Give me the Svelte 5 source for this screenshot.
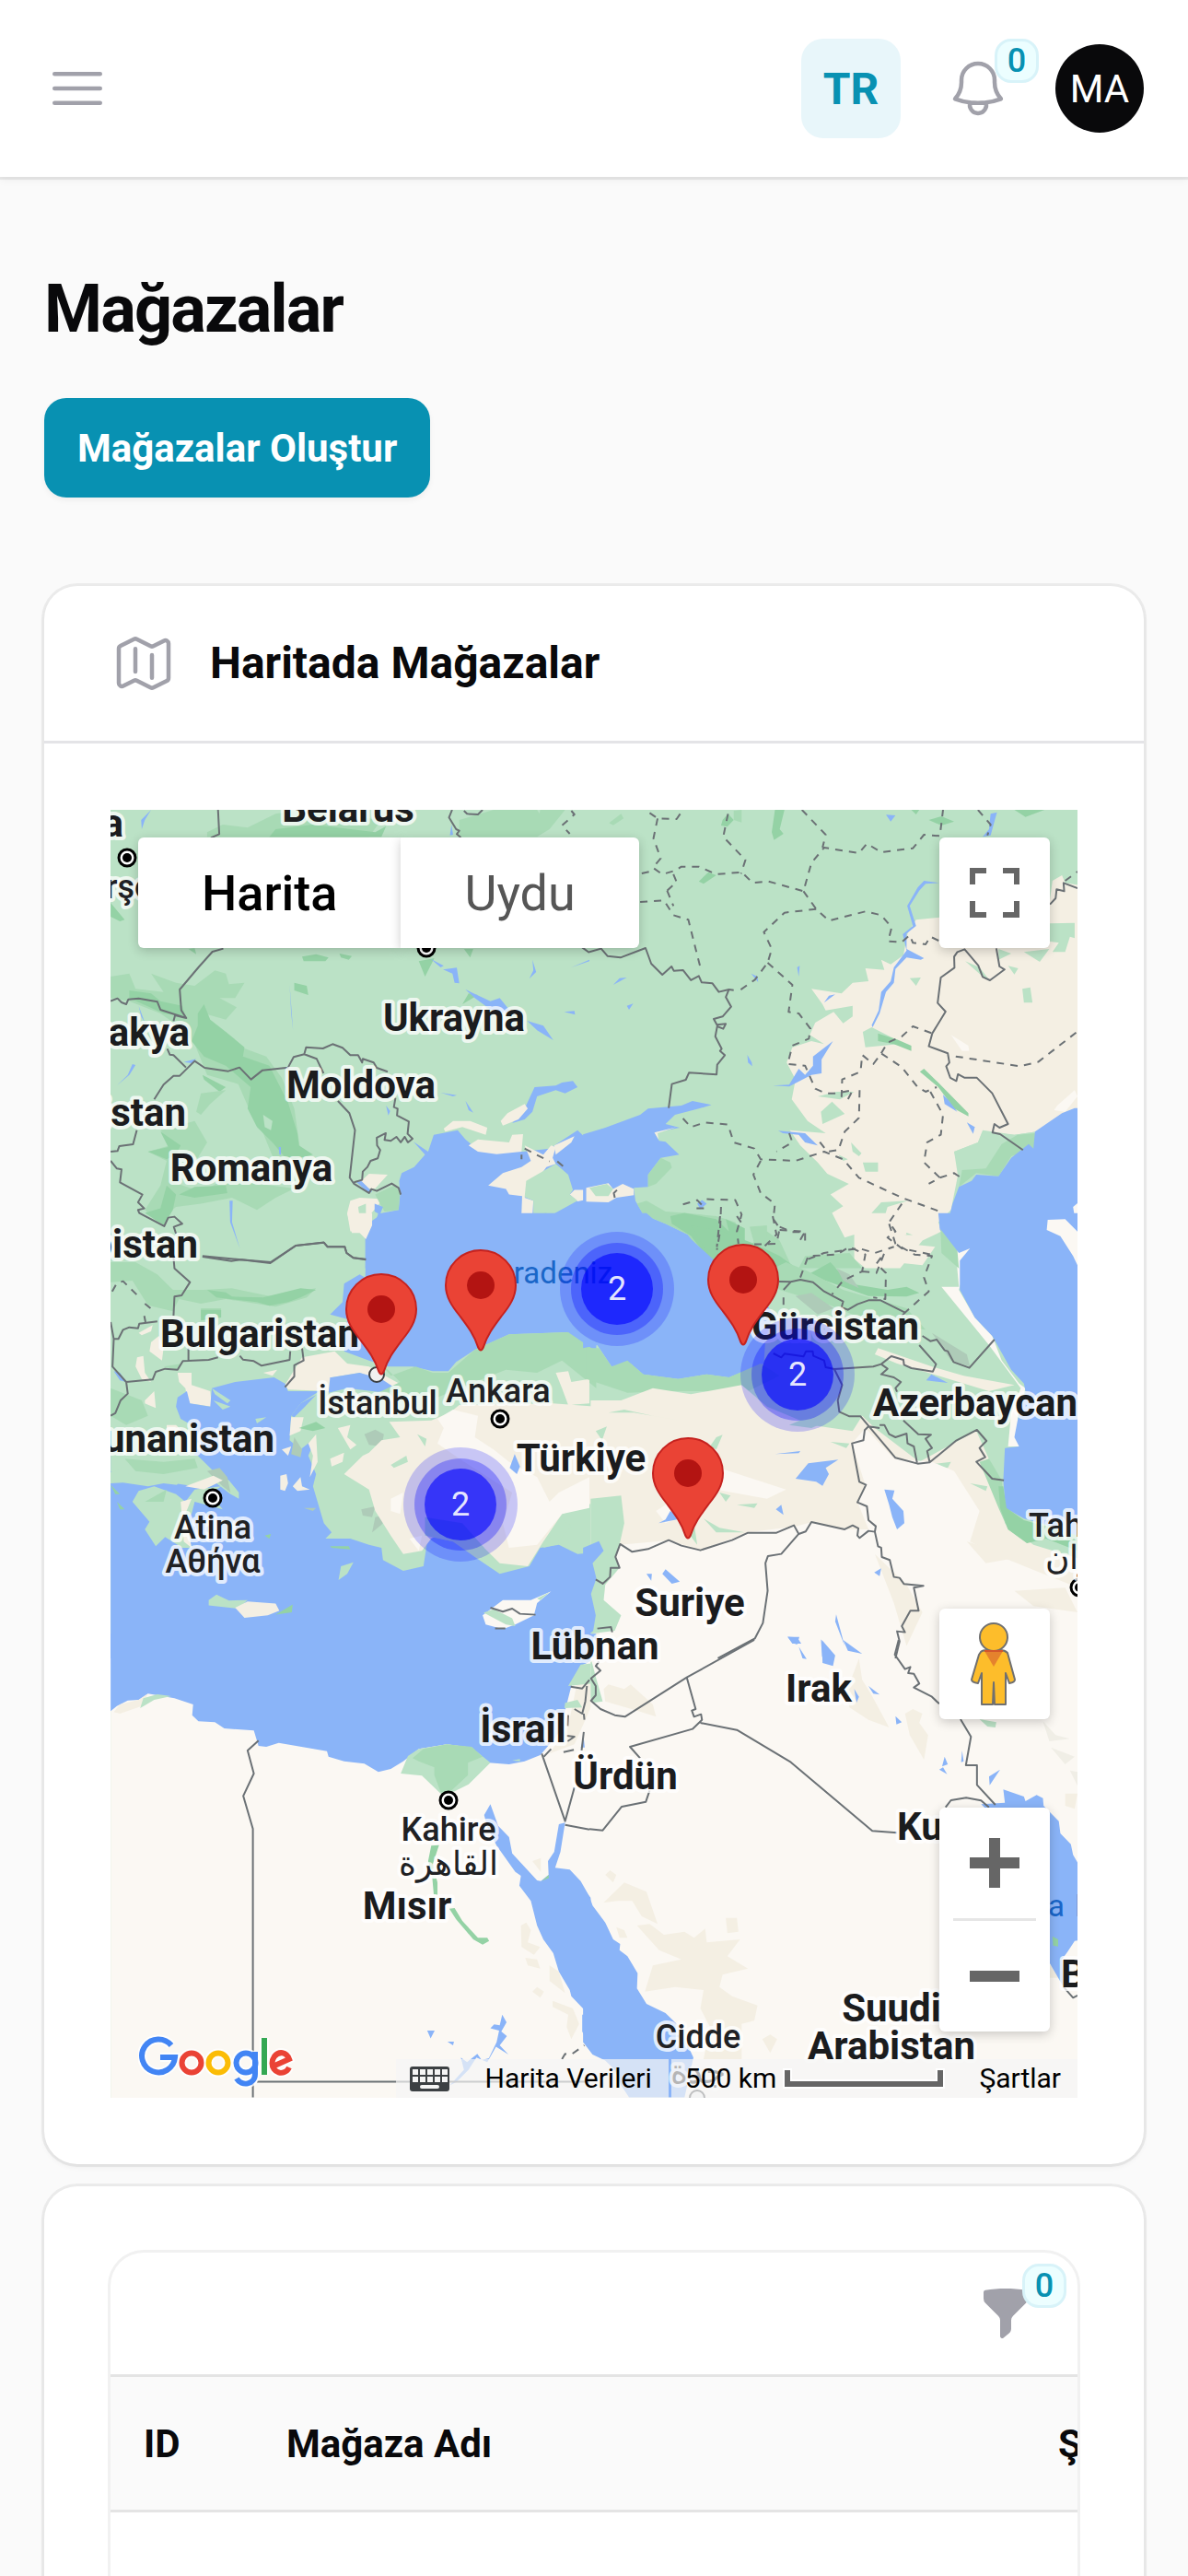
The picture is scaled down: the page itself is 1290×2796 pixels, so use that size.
<script>
  // Coordinates of places and pins are in map units (the map is 1050 x 1398).
  const W = 1050;
  const H = 1398;

  const countries = [
    ['Belarus', 258, 13, 'middle'], ['Polonya', 14, 29, 'end'], ['Ukrayna', 373, 240, 'middle'],
    ['Slovakya', 86, 256, 'end'], ['Moldova', 272, 313, 'middle'], ['Macaristan', 82, 343, 'end'],
    ['Romanya', 153, 403, 'middle'], ['Sırbistan', 95, 486, 'end'], ['Bulgaristan', 162, 583, 'middle'],
    ['Yunanistan', 178, 697, 'end'], ['Türkiye', 511, 718, 'middle'], ['Gürcistan', 787, 575, 'middle'],
    ['Azerbaycan', 939, 658, 'middle'], ['Suriye', 629, 875, 'middle'], ['Lübnan', 526, 922, 'middle'],
    ['Irak', 769, 968, 'middle'], ['İsrail', 448, 1012, 'middle'], ['Ürdün', 559, 1063, 'middle'],
    ['Mısır', 322, 1204, 'middle'], ['Kuveyt', 854, 1118, 'start'], ['Suudi', 848, 1315, 'middle'],
    ['Arabistan', 848, 1356, 'middle'], ['Bahreyn', 1032, 1278, 'start']
  ];
  const cities = [
    ['Varşova', 18, 96, 'middle'], ['İstanbul', 290, 656, 'middle'], ['Ankara', 421, 643, 'middle'],
    ['Atina', 111, 791, 'middle'], ['Αθήνα', 111, 828, 'middle'], ['Tahran', 997, 789, 'start'],
    ['تهران', 1015, 824, 'start'], ['Kahire', 367, 1119, 'middle'], ['القاهرة', 367, 1156, 'middle'],
    ['Cidde', 638, 1344, 'middle'], ['جدة', 638, 1382, 'middle']
  ];
  const seas = [['Karadeniz', 545, 514, 'end'], ['Basra', 1036, 1201, 'end'], ['Körfezi', 1047, 1201, 'start']];
  const capitals = [[18, 52], [343, 150], [423, 661], [111, 747], [367, 1075], [1052, 844]];

  const pins = [
    { x: 294, y: 614 }, { x: 402, y: 588 }, { x: 687, y: 582 }, { x: 627, y: 792 }
  ];
  const clusters = [
    { x: 380, y: 754, count: 2 }, { x: 550, y: 520, count: 2 }, { x: 746, y: 613, count: 2 }
  ];

  // The terrain is drawn in six sheets, three rows by two columns.
  const left = (y) => `translate(-10 ${y}) scale(.338 .3333)`;
  const right = (y) => `translate(520 ${y}) scale(.3444 .3333)`;
  const sheets = [
    {
      at: left(-9),
      shapes: [
        ['g2', 'M340 100L390 75 470 85 560 40 640 27 900 60 860 115 340 115ZM1150 60L1260 27H1400L1440 90 1400 115H1150ZM1410 27H1490L1440 90 1400 80Z'],
        ['g3', 'M560 90L680 75 880 100 915 80 900 115H540ZM30 330L75 385 60 390 30 375ZM645 505L690 497 730 508 720 520 650 520ZM765 495L805 503 795 515 770 508ZM280 480L300 478 305 497Z'],
        ['g2', 'M160 560L240 590 300 600 365 550 400 560 410 595 460 590 430 640 380 640 435 670 400 710 330 690 370 760 450 800 530 830 580 900 620 1000 640 1140 560 1180 520 1080 470 990 440 920 340 890 300 790 260 740 190 690 90 650 30 640V570L90 560 110 610 200 620Z'],
        ['g3', 'M90 615L160 625 190 650 260 665 270 700 200 690 90 640ZM310 690L330 660 350 710 400 750 460 800 455 830 540 860 570 920 600 980 630 1080 635 1120 680 1150 600 1170 550 1110 500 1060 470 1000 480 930 400 860 330 830 290 780 310 730ZM325 890L400 930 380 945 330 905Z'],
        ['g1', 'M520 1020L550 1040 545 1070 525 1060Z'],
        ['g2', 'M320 950L400 940 350 985 320 1020 305 1010ZM150 1140L220 1120 190 1070 300 1040 340 1110 310 1160 240 1150 230 1240 320 1270 400 1230 620 1260 560 1290 500 1330 420 1290 320 1310 240 1320 180 1370 140 1330 190 1250 210 1170Z'],
        ['g3', 'M150 1140L215 1125 190 1075 255 1120 240 1150 210 1165ZM250 1280L300 1255 400 1250 405 1275 300 1290ZM140 1340L190 1325 210 1250 240 1280 230 1330 200 1380Z'],
        ['g3', 'M1020 520L1070 510 1040 570ZM1165 480H1195L1185 508ZM620 590L660 600 665 630 620 615ZM1160 660L1180 625 1210 630Z'],
        ['w', 'M130 90L128 60 160 27 140 60ZM1120 110L1125 75 1130 108ZM1058 512L1100 535 1090 540ZM1098 547L1142 541 1150 592 1135 590 1128 560ZM1170 612L1250 650 1280 640 1320 690 1260 685 1200 640ZM1368 714L1420 730 1452 777 1400 745ZM1385 515L1397 555 1375 577 1388 550ZM1510 540L1568 515 1568 520ZM1487 685L1520 682 1522 694ZM605 597L616 745 610 690ZM1090 948L1142 956 1130 960ZM1170 975L1195 1013 1180 1005ZM915 990L928 1008 922 1022ZM412 1300H422L420 1370 445 1455 414 1370ZM50 925L85 890 100 855 110 858 90 890ZM265 848L305 838 290 852ZM120 665L140 720 128 700ZM570 1125H577V1150H572Z'],
        ['w', 'M848 1520V1410L870 1365 905 1340 955 1330 960 1280 957 1235 965 1210 1005 1190 1040 1150 1003 1108 1050 1140 1068 1085 1145 1070 1170 1100 1215 1140 1355 1140 1440 1130 1530 1070 1550 1090 1590 1075V1520Z'],
        ['w', 'M1320 1047L1360 1000 1392 930 1460 925 1480 915 1515 910 1530 930 1490 950 1460 940 1400 960 1385 1010 1360 1035Z'],
        ['b', 'M1100 1065L1130 1040 1185 1040 1240 1062 1235 1085 1160 1060 1105 1075ZM1283 1040L1305 1015 1360 985 1370 1000 1340 1035 1290 1055ZM1180 1120L1210 1100 1310 1110 1320 1085 1355 1083 1350 1140 1270 1148 1210 1140ZM1455 1120L1520 1090 1510 1110 1460 1150ZM830 1240L860 1212 920 1215 880 1260 850 1260ZM800 1300L830 1290 905 1295 860 1350 870 1370 850 1415 830 1400 800 1400 790 1340Z'],
        ['g1', 'M825 1320L850 1310V1350L830 1355Z'],
        ['g2', 'M880 1280L940 1250 960 1270 955 1330 910 1335 895 1310Z'],
        ['w', 'M820 1240L835 1235 870 1270 860 1275ZM878 1310L905 1320 895 1345 878 1335Z'],
        ['b', 'M1360 1120L1420 1150 1445 1120 1460 1125 1450 1160 1460 1180 1430 1190 1360 1290 1388 1300 1385 1350 1355 1382 1338 1375 1350 1340 1352 1285 1310 1280 1300 1262 1243 1250 1290 1210 1350 1190 1380 1170ZM1505 1280L1520 1265 1590 1265V1290L1530 1302Z'],
        ['g1', 'M1460 1180L1500 1215 1515 1265 1505 1280 1530 1300 1440 1350 1410 1392 1370 1397 1355 1382 1388 1345 1388 1300 1360 1288 1365 1235Z'],
        ['g2', 'M1370 1375L1390 1345 1430 1340 1440 1350 1400 1385Z']
      ],
      borders:
        'M375 27L379 106 352 118M392 479L357 489 312 540 252 612 257 680 273 705 237 696 232 715M273 705L190 678 180 652 120 641 87 644 80 660 65 654 52 641 30 650M212 805L220 824 232 826 272 866M30 1140L52 1138 58 1122 102 1116 114 1070M170 970L200 922 232 893H252L300 845 332 867 408 878 444 866 481 905 518 875 600 866 618 832 652 823 692 838 714 885M652 823L658 800 712 804 743 790 775 802 800 826 825 826 838 850 840 838 875 850 885 867 920 880M760 975L797 1015 815 1070 798 1225 812 1245 860 1275 868 1262 885 1268 933 1244 955 1258 962 1280M945 965L940 995 952 1000 950 1022 988 1042 984 1082 1000 1098 985 1110 975 1092 962 1110 948 1092 930 1105 910 1102 914 1080 885 1095 886 1120 896 1135 888 1162 865 1170 855 1190 840 1205 838 1232 812 1240M30 1170L50 1195 65 1198 60 1240 132 1280 118 1305 138 1325 118 1330 122 1340 202 1383 215 1355 235 1352 260 1375 233 1385 240 1407M325 1480L450 1492 545 1500 625 1446 715 1436 727 1450H782L788 1470 810 1486 850 1492M1127 27L1117 52 1140 90 1150 95 1142 106 1155 117M1165 30L1175 40 1210 42 1225 27M1545 475L1568 492',
      dashes: 'M1510 30L1520 42 1480 78 1505 105M1360 1130L1440 1172M1465 1172L1495 1197M1350 1150V1165'
    },
    {
      at: right(-9),
      shapes: [
        ['g3', 'M585 27H615L600 90 612 105 582 125 575 100ZM420 60L437 40 455 60 435 82 415 78ZM1070 60L1110 48 1150 65 1110 78ZM1340 27H1435L1375 50ZM345 260L375 230 400 240 360 268ZM1015 27H1040L1030 42Z'],
        ['g2', 'M62 70L100 40 108 55 75 77ZM455 30L480 27 480 68 455 60Z'],
        ['b', 'M1030 385L1100 378 1400 330 1450 335 1460 258 1490 240 1500 265 1590 280V1000L1410 1075 1340 1085 1240 1070 1225 1110 1150 1140 1165 1200 1140 1330 1100 1370 1110 1400 1050 1430 980 1520H870L835 1490V1410L805 1420 765 1340 800 1318 760 1280 818 1245 750 1212 720 1175 665 1120 632 1070 745 1080 688 1040 638 970 650 905 622 850 640 800 700 780 740 790 695 760 712 720 770 685 800 722 830 700V665L745 680 735 660 700 610 795 625 830 590 880 585 870 543 930 548 920 515 950 530 990 500 1003 430Z'],
        ['g1', 'M862 750L890 735 1015 800 975 790 870 800ZM1450 397L1530 395V445L1515 440 1500 490 1460 490 1480 460 1450 455ZM1370 490L1450 480 1420 522ZM1365 610L1390 605 1397 655 1370 655ZM1185 520L1230 540 1260 580 1240 570ZM1290 480L1330 495 1290 515ZM1010 575L1045 573 1030 600ZM1320 535L1352 543 1340 563ZM730 1010L765 977 805 1017 735 1050ZM720 960L780 945 835 945 790 970ZM862 1175H910V1205H870ZM825 1110L858 1145 850 1155 830 1140ZM785 1150L815 1165 800 1170ZM1150 1140L1225 1110 1240 1075 1340 1085 1410 1075 1400 1130 1330 1150 1290 1220 1165 1240ZM890 1340L920 1305 1005 1300 940 1320 930 1355 900 1358ZM885 1390L930 1378 1020 1412 920 1410Z'],
        ['g3', 'M910 755L970 775 1015 795V812L960 790 910 780ZM1042 880L1055 870 1100 915 1195 1015V1025L1150 1000 1100 930Z'],
        ['g2', 'M1300 1115L1350 1085 1405 1080V1130L1330 1155 1290 1220 1220 1210 1165 1255 1175 1200 1250 1195Z'],
        ['l', 'M1140 760L1195 795 1197 812 1175 812ZM1465 1005L1475 990 1530 940 1539 960 1500 1010Z'],
        ['w', 'M935 43L965 45 950 65ZM1240 115L1260 90 1265 40 1285 35 1265 110ZM1103 265L1060 268 1040 290 1010 340 1030 405 1000 430 1000 480 1055 510 1045 515 1000 508 965 545 960 590 935 620 915 690 893 735 890 728 912 680 920 620 950 585 960 540 1000 485 988 432 1020 405 1002 340 1035 280 1055 258ZM655 540L663 535 660 570ZM740 655L755 632 775 628ZM510 560L530 570 532 588ZM75 597L95 575 118 573ZM118 665L138 658 125 678ZM498 825L512 850 513 862 500 850ZM578 925L630 922 660 870 680 890 705 860V830L768 780 732 840V885L700 890 630 928ZM1115 955L1130 970 1160 1010 1120 985ZM1190 1045L1245 1078 1215 1060 1210 1082ZM595 1072L680 1080 720 1120 680 1110 660 1085 610 1080Z'],
        ['w', 'M-20 1084L50 1062 160 1020 185 1000 290 990 325 975 385 988 345 1000 270 1020 240 1050 285 1062 205 1078 220 1105 240 1108 283 1150 225 1160 185 1215V1255L140 1258 145 1300 170 1345 240 1375 310 1410 400 1520H-20Z'],
        ['b', 'M205 1078L275 1060 215 1080 218 1100ZM-10 1258L60 1243 75 1262 105 1245 140 1262V1282L85 1290 60 1305-10 1303Z'],
        ['g1', 'M0 1258L55 1245 75 1262 60 1285 20 1285Z'],
        ['g2', 'M225 1160L255 1175 260 1192 210 1245 185 1255V1215ZM180 1300L240 1335 300 1340 400 1350 460 1370 500 1450 560 1400 600 1430 640 1520H390L310 1410 240 1375 170 1345 150 1310Z'],
        ['g3', 'M255 1350L300 1340 400 1360 440 1400 430 1360 490 1390 490 1440 520 1520H400L320 1415 260 1375Z'],
        ['w', 'M1600 1000L1530 998 1490 1015 1405 1075 1400 1130 1385 1115 1330 1160 1290 1220 1220 1215 1205 1235 1165 1255 1145 1310 1135 1350 1105 1360V1395L1165 1470 1200 1460 1170 1520H1600ZM340 1310L355 1298 370 1310 350 1328Z'],
        ['l', 'M1445 1365L1500 1362 1535 1385 1525 1320 1560 1290V1520L1525 1490 1485 1415 1442 1395ZM1105 1395L1165 1470 1200 1455 1165 1520Z'],
        ['g2', 'M505 1385L560 1380 560 1420 520 1440ZM680 1480L820 1470 860 1520H660Z']
      ],
      borders:
        'M0 490L37 479 57 503 98 508 177 477 195 528 230 564 259 537 266 551 295 549 320 582 345 568 354 589 388 592 408 620 440 612 430 637 447 668 420 700 392 708 402 727 430 724 422 740 403 732 397 765 417 805 412 812 427 826 403 857 401 889 314 883 304 906 260 920 250 998M440 612L455 614M1539 282L1495 265 1497 292 1473 286 1470 315 1452 335M1283 478L1293 537 1309 547 1263 582 1240 571 1226 534 1183 481 1160 490 1150 505 1151 541 1108 573 1098 656 1123 684 1081 755 1070 797 1130 820 1135 850 1125 862 1138 900 1157 910 1162 888 1182 899H1221L1270 950 1320 1050 1293 1062 1277 1050 1271 1078 1295 1083 1367 1135M80 1290L77 1275 87 1265',
      dashes:
        'M190 37L215 55 275 57 295 27M215 55L202 120 225 185 200 215 230 237 270 225 290 212 345 212 400 237 480 230 515 265 565 260 675 292 700 200 740 150 850 168 875 137 920 165 1020 152 1055 108 1105 112 1115 27M437 40L422 115 492 190 478 235M670 27L745 108 735 150M675 292L715 350 755 388 870 358 920 370 953 410 942 455 985 458 1010 435 1020 460 1060 465 1075 440 1105 455M715 350L615 362 550 425 575 480 562 525 522 580 475 614M562 525L640 597 628 685 660 690 697 740 692 772 640 795 625 855 680 860 712 935 745 950H780L830 940 815 970 795 960 797 905 855 880 860 825 895 855 920 820 985 865 1035 930 1060 945 1095 930M852 940L850 1030 805 1075 785 1135 750 1140 720 1100M920 820L940 785 985 765 1020 732 1081 755M1075 945L1115 1020 1108 1085 1065 1110 1055 1175 1105 1225 1070 1245M1105 1225L1150 1210 1172 1225M1155 830L1358 862 1415 848 1535 752M295 1032L320 1060 365 1045 437 1052 455 1110 520 1130 540 1165 650 1170 740 1140 800 1165 850 1225 985 1290 1110 1337M540 1170L517 1215 540 1275 585 1310 580 1360 600 1390 590 1440 520 1442M600 1385L640 1402 680 1402V1450M985 1310L945 1370 965 1400 940 1420 985 1455 1075 1475M165 234L205 225M160 327L235 322 265 370 312 385 335 480 350 540M245 290L275 262 260 225M245 290L265 340M295 1312L340 1298 365 1325 320 1325M370 1295L460 1298 480 1345 465 1400 470 1440M415 1320L412 1400 402 1460M690 1490L740 1470 850 1455 900 1470 960 1450M630 1080L640 1110 590 1140M1225 27L1265 75 1255 110M1500 258L1539 228'
    },
    {
      at: left(441),
      shapes: [
        ['g2', 'M30 150L110 150 180 190 230 240 330 240 420 235 540 260 690 235 660 265 560 295 400 270 320 285 250 270 230 310 150 290 100 210 30 215ZM320 300H385L380 330 320 330ZM30 560L130 600 150 650 80 680 30 650ZM200 490L260 480 240 500Z'],
        ['g3', 'M340 240L400 248 420 262 520 265 640 235 690 240 640 265 600 280 540 292 500 280 370 265ZM320 305H385V330L320 340Z'],
        ['w', 'M848 200L830 190 780 220 775 280 735 320 790 335 780 440 860 470 920 490 1000 490 1065 505 1115 505 1140 475 1200 435 1310 385 1500 378 1515 415 1590 440V-10H890L860 80 850 120Z'],
        ['b', 'M645 460L750 440 790 480 860 490 930 530 970 552 930 560 900 535 830 510 740 525 735 570 600 565 590 550 620 500ZM790-10H870V30L850 75 830 55 805 55ZM120 380L165 355 160 375 130 388ZM160 410L185 390 200 430 195 470 155 440ZM115 460L135 455 140 510 160 540 130 530 110 490ZM245 510L290 510 290 550 350 570 355 620 280 610 270 560 250 540ZM140 600L170 570 175 625 140 610ZM520 510L565 500 550 520ZM210 680H240L260 700H210ZM310 640L345 660 325 655Z'],
        ['w', 'M740 525L830 510 900 530 945 560 890 572 790 560 730 575 735 525ZM430 560L460 555 450 570ZM40 505L60 510 80 540 60 535Z'],
        ['w', 'M30 1460V870L70 868 150 880 200 870 280 880 310 900 285 925 255 925 230 900 290 790 315 750 290 680 255 660 240 620 245 590 275 570 285 610 350 620 355 560 430 540 555 525 590 545 600 570 700 570 640 610 610 650 605 730 640 760 690 720 665 780 690 840 680 880 715 1000 740 1030 720 1050 800 1050 860 1070 900 1080 905 1120 970 1155 1035 1140 1050 1040 1130 1060 1200 1110 1280 1165 1375 1140 1410 1080 1470 1070 1530 1100 1590 1095V1460ZM30 835L70 780 30 780Z'],
        ['w', 'M610 650L640 610 690 582 650 625 620 655Z'],
        ['g1', 'M355 560L415 600 405 610 365 580ZM360 600L415 620 390 630ZM495 660L530 655 500 675ZM30 740L310 780 370 840 410 860 442 900V920L415 905 370 870 350 880 300 880 200 865 105 862 70 815 40 835 30 830ZM100 930L120 895 170 880 240 905 270 930 300 890 385 880 350 905 390 955 300 930 290 970 270 990 290 1080 260 1080 205 1045 175 1075 140 1020 155 995ZM762 1185L770 1140 810 1127 790 1165ZM345 1250L370 1232 410 1252 470 1250 440 1278 345 1268Z'],
        ['g2', 'M75 790L200 800 300 790 310 820 200 840 110 830ZM140 930L210 890 200 930Z'],
        ['t', 'M340 830L380 820 405 850 415 900 390 880ZM620 720L645 760 640 785 610 775ZM845 710L880 695 908 710 900 750 860 745ZM900 1005L870 1030 880 980 930 970ZM835 955L880 945 870 980 840 975ZM650 950L690 950 680 960Z'],
        ['b', 'M270 880L360 845 390 860 330 890ZM255 930L290 920 270 970 290 1080 265 1060ZM430 1275L470 1255 560 1262 572 1285 535 1300 460 1308ZM575 845L595 840 600 870 590 895 575 890ZM615 880L640 850 645 880 670 890 630 895ZM610 655L650 655 640 700 605 715ZM580 760L610 750 600 780ZM665 740L690 710 695 800 670 850 680 780ZM760 690L800 680 790 720 820 745 800 760ZM735 790L780 770 775 800 740 815Z'],
        ['g3', 'M560 1298L615 1265 612 1290ZM635 690L690 670 720 690 680 700ZM30 875L60 905 45 905ZM50 930L75 955 60 955ZM525 1040L545 1035 540 1050ZM735 1075H795L800 1085 740 1080Z'],
        ['g2', 'M880 460L930 520 1010 490 1065 510 1115 510 1200 435 1310 385 1500 378 1590 440V560L1480 470 1400 510 1300 500 1200 540 1080 590 900 570 960 540Z'],
        ['b', 'M925 670L1060 665 1120 640 1150 615 1450 610 1590 620V930L1480 970 1420 1060 1370 1140 1280 1130 1230 1080 1150 1000 1060 1050 1030 1090 970 1100 930 1040 880 960 860 890 780 840 840 780 860 770 900 730 960 720ZM1460 510L1500 505 1510 540 1568 530V610L1500 615 1480 560Z'],
        ['g1', 'M930 810L980 780 985 800 940 820ZM1015 710L1045 725 1040 750ZM1040 980L1160 1000 1230 1080 1250 1140 1130 1060 1040 1040ZM1480 985L1510 1010 1460 1070 1420 1080Z'],
        ['l', 'M1080 660L1130 630 1210 650 1200 720 1260 760 1310 800 1400 850 1440 930 1470 900 1568 850V950L1480 970 1400 1070 1310 1080 1290 1000 1320 900 1150 790 1080 740 1100 690ZM930 920L970 900 960 970 930 960ZM990 1050L1030 1040 1020 1090Z'],
        ['w', 'M1328 775L1345 815 1335 840 1312 820Z'],
        ['l', 'M1225 1300L1290 1250 1380 1250 1445 1222 1400 1260 1390 1300 1330 1330 1290 1345 1235 1330Z'],
        ['g1', 'M1228 1292L1260 1280 1320 1310 1330 1335 1300 1330 1240 1298ZM1400 1245L1440 1225 1410 1250Z']
      ],
      borders:
        'M325 132L418 146 450 142 543 153 625 96 715 86 727 100H782L788 120 810 136 850 140M232 135L235 170 285 215 258 258 235 262 232 325M30 345L40 400 36 490 80 540 165 532 175 507 205 497 245 500 262 472 345 468 375 460M80 540L85 578 62 600 45 642 30 650M40 400H55L70 370 90 362 118 365 122 350 180 343M280 430V470M445 455L455 467 490 472 515 487 605 468 607 440M645 430L650 470 620 486V522L590 557M1250 1275L1290 1288 1320 1278 1345 1295 1395 1298M1265 1343H1298',
      dashes: 'M35 245L50 218 70 212 120 262M140 285L158 300M138 325L142 345'
    },
    {
      at: right(441),
      shapes: [
        ['g3', 'M320 30L420 50 520 90 600 130 640 160 560 170 480 300 390 150ZM690 190L760 150 820 220 940 240 1000 230 1040 250 1000 262 880 260Z'],
        ['g2', 'M620 150L690 180 800 240 1000 300 1060 370 900 350 760 290 600 240 560 180Z'],
        ['t', 'M780 170L820 190 850 235 800 210ZM700 250L770 300 720 320 650 260ZM1080 380L1190 450 1200 490 1140 470Z'],
        ['b', 'M860-10L990-10 1000 60 900 100 840 60ZM930 110L1000 90 1090 100 1050 160 960 150Z'],
        ['w', 'M-20-10H180L240 45 310 65 400 150 470 230 560 290 580 320 555 400 550 480 440 525 370 515 280 530 170 515 130 480 70 490 25 420-20 430Z'],
        ['g2', 'M-10 430L30 430 70 490 120 470 170 515 280 530 370 515 440 525 540 480 600 520 500 570 330 570 250 570 120 575-10 530Z'],
        ['b', 'M4 600L100 600 200 560 320 580 480 550 560 620 700 680 830 700 860 650 900 690 1040 800 1220 700 1290 860 1310 1000 1400 1070 1590 1130V1460H4Z'],
        ['b', 'M910 430L1080 490 1180 520 1340 550 1260 570 1100 520 970 480 900 450Z'],
        ['g1', 'M60 640L140 640 310 670 200 650 110 630ZM20 700L55 685 40 730ZM400 720L420 712 400 760 380 750ZM465 940L530 935 520 950ZM410 900L445 910 430 930ZM360 985L410 1015 490 1030 400 1030ZM310 1030L330 1000 340 1070ZM760 735L820 740 810 755ZM1060 810L1140 800 1130 820ZM1200 870L1255 880 1250 895ZM920 960L950 900 940 1000ZM630 680L720 640 790 650 700 690Z'],
        ['l', 'M95 1070L250 1056 350 1088 500 1030 650 1010 700 997 800 1020 880 1020 845 930 870 875 828 740 870 690 960 790 1080 800 1150 830 1230 960 1200 1060 1300 1110 1420 1160 1590 1230V1460H20L50 1200ZM380 810L620 890 560 920 400 890ZM210 960L300 900 330 960 240 1000Z'],
        ['b', 'M900 1100L1000 1200 1050 1290 1000 1400 960 1260ZM1190 1060L1360 1110 1250 1130ZM1340 1220L1500 1210 1539 1290 1400 1270Z'],
        ['g1', 'M4 920L100 910 110 1000 95 1070 80 1110 95 1145 50 1200 45 1250 100 1300 80 1350 4 1360Z'],
        ['w', 'M-20 1080L30 1058 45 1090 10 1130 22 1180 5 1230 20 1300 12 1350-20 1380Z'],
        ['w', 'M650 855L690 805 785 793 745 820 755 840 735 878 715 865ZM585 775L665 765 660 772ZM930 890L962 893 955 920 990 960 993 1000 970 1020 955 980 945 940ZM588 955L605 940 612 973ZM218 1000L240 988 255 960 290 985ZM180 1165H197L195 1187ZM230 1165L240 1150 285 1190 260 1197ZM898 1160L920 1147 915 1172ZM778 1297L805 1400 775 1320ZM730 1378L775 1460H735ZM625 1370L655 1372 668 1392 640 1392ZM1062 535L1078 515 1130 543Z'],
        ['l', 'M1150 60L1200 105 1165 240 1215 330 1270 390 1300 470 1355 545 1375 560 1350 650 1355 750 1320 750 1330 640 1360 560 1260 420 1110 230 1165 230Z'],
        ['g2', 'M1105-10L1160 110 1165 170 1110 120ZM1230 800L1260 790 1300 860 1310 960 1390 1010 1380 1065 1320 1020 1290 950Z'],
        ['w', 'M1100-10L1105 40 1165 120 1200 105 1168 145V240L1215 330 1270 390 1330 500 1370 545 1375 570 1350 665 1340 720 1355 750 1310 755 1305 860 1312 950 1370 985 1460 1010 1539 1085H1600V-10Z'],
        ['g3', 'M1290 880L1305 880 1315 950 1370 990 1540 1040 1540 1090 1440 1050 1380 1065 1320 1020 1295 950Z'],
        ['l', 'M1445 12L1500 10 1539 50V160L1525 130 1485 65 1442 45Z']
      ],
      borders:
        'M598 213L635 214 665 207 705 215 740 245 800 278 795 297 815 305 845 287 880 274H918L995 314 985 325M635 214L612 240M1050 390L1075 407 1095 402 1120 437 1130 440 1148 475 1198 494 1277 402M1040 420L1093 482 1083 506 1015 495 992 484 990 468 952 456 920 482 895 490 772 498 745 492 740 470 706 455 704 440H683L675 457 615 448 605 460 580 447M772 498L797 550 783 600 788 637 820 652H855L965 787 1035 806 1073 802 1155 732 1222 696 1252 732 1230 755 1248 785 1220 800 1270 855 1307 860M920 482L940 497 920 515 960 525 982 540 965 560 970 572M990 665L1037 710 1077 712 1060 725 1080 755 1065 765 1073 802M915 680H930L945 710 965 720 1000 708 1003 740 1023 750 1033 803M915 690L880 685 868 697 864 730 828 740 851 865 872 875 845 932 875 945 880 990 903 1010 900 1028 910 1075 920 1080 922 1110 947 1120 960 1175 978 1178 992 1198 1053 1204 1023 1210 1038 1285H1012L985 1335 995 1355 970 1352 978 1385 965 1440M20 1183L42 1197 65 1175 67 1145 95 1145 82 1110 97 1068 135 1093 185 1084 250 1055 290 1073 350 1088 450 1055 500 1031H590L645 1007 660 1035 682 1027 700 996 805 1020 830 1007 848 1017 845 1040 852 1048 880 1025 900 1028M660 1035L605 1100 563 1107 555 1130 562 1220 547 1325 522 1375 405 1440M25 1343L68 1338 72 1355',
      dashes:
        'M412 0L402 100M465 0L485 30M578 0L590 60 550 100M600 45L680 50 655 95M665 200L690 130 780 125 820 100 870 125 860 180 800 210 765 255M945 25L965 90 1025 125 1080 130 1055 200 1070 245 995 314M860 180L905 185 930 120 905 155 935 185 933 270 895 265M612 265V300'
    },
    {
      at: left(901),
      shapes: [
        ['l', 'M30 60H1590V1520H30Z'],
        ['w', 'M30-20H1590V60L1540 85 1510 150 1490 230 1480 290 1440 340 1410 375 1360 395 1310 405 1245 400 1190 350 1110 340 1020 355 970 395 930 420 890 430 845 403 780 395 730 380 725 362 570 335 530 348 505 345 490 295 395 288 365 268 312 265 292 245 295 210 235 190 150 175 120 195 85 197 50 215 30 232Z'],
        ['b', 'M40 235L60 210 120 195 150 175 130 215 60 240ZM1540 85L1590 80V180L1520 340 1440 370 1500 280Z'],
        ['g1', 'M125 222L135 190 180 177 225 183 170 195ZM962 435L985 378 1020 355 1110 340 1190 350 1250 400 1180 470 1120 500 1090 500 1030 442ZM1540 80L1590 75V140L1500 150ZM1490 205L1530 195 1545 220 1488 222ZM1320 392L1345 388V395Z'],
        ['g2', 'M1000 385L1035 355 1110 340 1190 348 1225 380 1178 400V440L1120 495H1090L1070 440 1070 415 1020 395Z'],
        ['w', 'M1250 535L1230 570 1240 610 1270 670 1330 755 1348 768 1343 800 1380 850 1400 930 1420 975 1452 1020 1470 1080 1505 1140 1510 1160 1568 1222 1590 1240V855L1568 835 1540 785 1505 748 1458 742 1475 690 1490 595 1470 600 1455 690 1435 720 1437 765 1412 785 1400 783 1320 695 1310 642 1275 605ZM1545 1220H1590V1345L1568 1320 1545 1275ZM1540 350L1550 320 1553 350Z'],
        ['g3', 'M1060 670L1085 668 1065 730 1080 790V830L1068 828 1062 760 1050 720ZM1118 875L1135 873 1160 915 1210 970 1240 970 1246 980 1225 992 1195 975 1140 910ZM1415 785L1437 765 1438 775Z'],
        ['b', 'M1348 930L1365 920 1380 945 1370 985 1410 1000 1390 1025 1350 1000ZM1362 1035L1400 1040 1410 1070 1370 1060ZM1440 1060L1470 1080 1490 1150 1440 1110ZM1385 1145L1400 1130 1422 1145 1410 1165ZM1450 1175L1515 1200 1535 1250 1510 1300 1495 1260 1500 1220 1450 1195ZM1385 720L1412 710 1412 755Z'],
        ['w', 'M1047 1272H1071L1058 1298ZM1112 1308H1133L1130 1320ZM1250 1265L1262 1252 1280 1255 1288 1220 1302 1245 1285 1275 1303 1290 1280 1320 1308 1350 1268 1325 1240 1375 1205 1360 1180 1400 1140 1440 1120 1450 1165 1400 1155 1360 1175 1375 1208 1348 1222 1368 1245 1362 1270 1310 1278 1272Z']
      ],
      borders:
        'M505 328L470 360 490 435 456 508 487 615V1490M500 1439H1568M1415 370L1490 590 1520 480M1422 380L1445 355M1490 602L1568 617M1508 152L1545 158 1568 130M1520 225L1545 240 1555 200 1560 150M1550 240L1552 260M1550 300L1543 360M1500 245L1498 280M1495 312L1520 315 1498 330M1485 365L1518 358',
      dashes: 'M1480 1365L1490 1348 1510 1350 1552 1320'
    },
    {
      at: right(901),
      shapes: [
        ['l', 'M4 55H1590V1520H4Z'],
        ['g1', 'M4 60L10 80 20 120 42 200 10 205 4 190ZM1230 258L1283 268 1280 285 1255 282Z'],
        ['b', 'M45 160L60 145 110 160 130 145 200 210 210 250 150 230 50 200ZM810 170L850 60 860 130 890 180 945 285 880 260 820 220ZM995 240L1020 225 1050 240 1040 270 1068 310 1055 390 1010 310ZM50 765L65 750 85 765 75 790ZM45 855L110 790 180 820 215 925 165 900 135 850 90 850ZM85 935L110 945 120 970 95 970ZM150 930L190 925 235 960 300 950 330 970 365 940 370 985 475 975 435 1030 500 1070 420 1090 410 1130 450 1160 530 1190 520 1240 480 1250 480 1365 360 1365 380 1260 350 1200 360 1140 270 1130 175 1145 200 1060 290 1040 220 1010ZM430 905H465L470 950 435 955ZM545 1300L570 1285 592 1300 570 1345ZM1450 1060V1100H1600V1060ZM1500 500H1539L1530 550 1500 540Z'],
        ['t2', 'M1430 265L1470 310 1515 322 1450 330ZM1455 350L1530 380 1500 405ZM1515 425L1539 430V475Z'],
        ['w', 'M-20 810L0 835 10 865 50 920 75 975 97 990 95 1010 120 1030 152 1085 150 1135 180 1185 210 1200 240 1215 275 1250 310 1320 328 1360 300 1490H125L100 1450 80 1400 50 1370 10 1350-20 1310Z'],
        ['w', 'M1235 535L1310 530 1305 487 1370 510 1375 525 1410 505 1430 515 1432 540 1480 590 1485 630 1518 665 1525 700 1539 725 1600 800V970L1530 980 1508 1015 1490 1040 1495 1130 1450 1050 1420 900 1300 600ZM625-10H662L655 15 640 10ZM660 22L685 62 672 60ZM733 0L775 50 768 85 735 75ZM800 0L860 45 815 35ZM880 150L915 178 895 175ZM835 160L850 185 842 205ZM965 248L985 268 968 275ZM1120 380L1130 405 1112 412ZM1103 422L1115 415 1128 437ZM1175 360L1180 395 1172 398ZM1260 445L1295 422 1262 473Z'],
        ['g3', 'M1460 965L1478 975V998L1462 995Z']
      ],
      borders:
        'M520 0L307 122 112 250 80 245 35 225 5 198 20 180V150L5 125 35 100 20 85 30 70M307 122L335 225 323 230 330 250 352 242 355 260 325 290 128 348 160 385M190 490L178 527 102 543 42 620 0 616M350 270L465 293 635 398 892 622 970 628M975 0L963 48 995 95 1012 88 1005 108 1023 110 1040 142 1023 155 1080 185 1103 208M1170 258L1203 315 1187 408H1222V472L1280 537M1123 545L1140 522 1188 514 1235 523 1260 545M1495 1130L1525 1165 1539 1158',
      dashes: ''
    }
  ];
</script>

<div class="app">
  <header class="topbar">
    <button class="plain" aria-label="Menü">
      <svg class="icon" viewBox="0 0 24 24"><path d="M3.75 6.75h16.5M3.75 12h16.5m-16.5 5.25h16.5" /></svg>
    </button>
    <div class="tools">
      <button class="lang">TR</button>
      <button class="plain" aria-label="Bildirimler">
        <svg class="icon" viewBox="0 0 24 24"><path d="M14.857 17.082a23.848 23.848 0 005.454-1.31A8.967 8.967 0 0118 9.75v-.7V9A6 6 0 006 9v.75a8.967 8.967 0 01-2.312 6.022c1.733.64 3.56 1.085 5.455 1.31m5.714 0a24.255 24.255 0 01-5.714 0m5.714 0a3 3 0 11-5.714 0" /></svg>
        <span class="badge">0</span>
      </button>
      <button class="avatar">MA</button>
    </div>
  </header>

  <main>
    <div class="heading">
      <h1>Mağazalar</h1>
      <button class="primary">Mağazalar Oluştur</button>
    </div>

    <div class="cards">
      <section class="card">
        <header class="card-head">
          <svg class="icon" viewBox="0 0 24 24"><path d="M9 6.75V15m6-6v8.25m.503 3.498l4.875-2.437c.381-.19.622-.58.622-1.006V4.82c0-.836-.88-1.38-1.628-1.006l-3.869 1.934c-.317.159-.69.159-1.006 0L9.503 3.252a1.125 1.125 0 00-1.006 0L3.622 5.689C3.24 5.88 3 6.27 3 6.695V19.18c0 .836.88 1.38 1.628 1.006l3.869-1.934c.317-.159.69-.159 1.006 0l4.994 2.497c.317.158.69.158 1.006 0z" /></svg>
          <h2>Haritada Mağazalar</h2>
        </header>
        <div class="card-body">
          <div class="map">
            <svg class="terrain" viewBox="0 0 {W} {H}" role="img" aria-label="Harita">
              {#each sheets as sheet}
                <g transform={sheet.at}>
                  {#each sheet.shapes as [kind, d]}
                    <path class={kind} {d} />
                  {/each}
                </g>
              {/each}
              {#each sheets as sheet}
                <g transform={sheet.at}>
                  <path class="border" d={sheet.borders} />
                  <path class="border dashed" d={sheet.dashes} />
                </g>
              {/each}
              {#each capitals as [x, y]}
                <circle class="ring" cx={x} cy={y} r="9" />
                <circle cx={x} cy={y} r="5" />
              {/each}
              <circle class="town" cx="289" cy="613" r="8" />
              <circle class="town" cx="637" cy="1398" r="8" />
              {#each seas as [name, x, y, anchor]}
                <text class="sea" {x} {y} text-anchor={anchor}>{name}</text>
              {/each}
              {#each cities as [name, x, y, anchor]}
                <text class="city" {x} {y} text-anchor={anchor}>{name}</text>
              {/each}
              {#each countries as [name, x, y, anchor]}
                <text class="country" {x} {y} text-anchor={anchor}>{name}</text>
              {/each}
            </svg>

            {#each pins as pin}
              <button class="pin" aria-label="Mağaza" style:left="{(pin.x / W) * 100}%" style:top="{(pin.y / H) * 100}%">
                <svg viewBox="0 0 78 111">
                  <path fill="#ea4335" stroke="#c5221f" stroke-width="2" d="M39 1C18 1 1 18 1 39C1 52 8 62 16 72C25 84 32 93 36 106Q39 113 42 106C46 93 53 84 62 72C70 62 77 52 77 39C77 18 60 1 39 1Z" />
                  <circle cx="39" cy="39" r="15" fill="#b31412" />
                </svg>
              </button>
            {/each}
            {#each clusters as c}
              <button class="cluster" style:left="{(c.x / W) * 100}%" style:top="{(c.y / H) * 100}%">
                <svg viewBox="0 0 124 124" fill="#0000ff">
                  <circle cx="62" cy="62" r="39" opacity=".6" />
                  <circle cx="62" cy="62" r="50" opacity=".3" />
                  <circle cx="62" cy="62" r="62" opacity=".2" />
                </svg>
                <span>{c.count}</span>
              </button>
            {/each}

            <div class="controls">
              <div class="control-row">
                <div class="types">
                  <button class="active">Harita</button>
                  <button>Uydu</button>
                </div>
                <button class="square" aria-label="Tam ekran">
                  <svg width="54" height="54" viewBox="0 0 18 18" fill="#666"><path d="M0 0v6h2V2h4V0zM12 0v2h4v4h2V0zM16 16h-4v2h6v-6h-2zM2 12H0v6h6v-2H2z" /></svg>
                </button>
              </div>
              <div class="control-stack">
                <button class="square" aria-label="Sokak görünümü">
                  <svg width="54" height="92" viewBox="0 0 54 92">
                    <g fill="#fdbd2b" stroke="#707070" stroke-width="2" stroke-linejoin="round">
                      <path d="M12 33Q14 31 19 31H33Q38 31 41 34L49 63Q49 66 43 67L39 56V90H27L26 66 25 90H13V56L9 67Q2 66 2 63L10 36Z" />
                      <circle cx="26" cy="17" r="15" />
                    </g>
                    <path d="M16 32H36L26 49Z" fill="#e5822d" />
                    <path d="M16 32H36" stroke="#d3562b" stroke-width="2" />
                  </svg>
                </button>
                <div class="zoom">
                  <button aria-label="Yakınlaştır"><svg width="54" height="54" viewBox="0 0 18 18" fill="#666"><path d="M7 0h4v7h7v4h-7v7H7v-7H0V7h7z" /></svg></button>
                  <hr />
                  <button aria-label="Uzaklaştır"><svg width="54" height="54" viewBox="0 0 18 18" fill="#666"><path d="M0 7h18v4H0z" /></svg></button>
                </div>
              </div>
            </div>

            <div class="footer">
              <a class="google" href="#google" aria-label="Google">
                <svg width="174" height="74" viewBox="0 0 174 74" fill="none">
                  {#each [true, false] as halo}
                    <g class:halo stroke-width="6">
                      <path stroke="#4285f4" d="M36 17A18 18 0 1 0 40 30H24" />
                      <circle stroke="#ea4335" cx="58" cy="36" r="10.5" />
                      <circle stroke="#fbbc05" cx="87" cy="36" r="10.5" />
                      <circle stroke="#4285f4" cx="117" cy="36" r="10.5" />
                      <path stroke="#4285f4" d="M127 24V48C127 60 112 62 107 53" />
                      <path stroke="#34a853" d="M137 9V49" />
                      <path stroke="#ea4335" d="M146 40L164 32C161 24 153 23 148 29C141 39 150 50 159 46C162 45 163 43 164 41" />
                    </g>
                  {/each}
                </svg>
              </a>
              <div class="legal">
                <button class="keys" aria-label="Klavye kısayolları">
                  <svg width="43" height="27" viewBox="0 0 43 27">
                    <rect width="43" height="27" rx="3" fill="#3c4043" />
                    <path stroke="#f5f5f5" stroke-width="6" stroke-dasharray="6 2" d="M3 6H41M3 14H41" />
                    <rect x="11" y="20" width="21" height="4" rx="2" fill="#f5f5f5" />
                  </svg>
                </button>
                <button class="data">Harita Verileri</button>
                <button class="scale">500 km
                  <svg width="178" height="24" viewBox="0 0 178 24" fill="none">
                    <path stroke="#fff" stroke-width="10" d="M6 1V18H172V1" />
                    <path stroke="#666" stroke-width="6" d="M6 3V18H172V3" />
                  </svg>
                </button>
                <a class="terms" href="#terms">Şartlar</a>
              </div>
            </div>
          </div>
        </div>
      </section>

      <section class="card list">
        <div class="panel">
          <div class="panel-bar">
            <button class="plain" aria-label="Filtrele">
              <svg width="60" height="60" viewBox="0 0 20 20" fill="#a1a1aa"><path d="M2.628 1.601C5.028 1.206 7.49 1 10 1s4.973.206 7.372.601a.75.75 0 01.628.74v2.288a2.25 2.25 0 01-.659 1.59l-4.682 4.683a2.25 2.25 0 00-.659 1.59v3.037c0 .684-.31 1.33-.844 1.757l-1.937 1.55A.75.75 0 018 18.25v-5.757a2.25 2.25 0 00-.659-1.591L2.659 6.22A2.25 2.25 0 012 4.629V2.34a.75.75 0 01.628-.74z" /></svg>
              <span class="badge">0</span>
            </button>
          </div>
          <div class="scroller">
            <table>
              <thead>
                <tr><th class="id">ID</th><th class="name">Mağaza Adı</th><th>Şehir</th></tr>
              </thead>
              <tbody>
                <tr><td></td><td></td><td></td></tr>
              </tbody>
            </table>
          </div>
        </div>
      </section>
    </div>
  </main>
</div>

<style>
  :global(body) {
    background: #fafafa;
  }
  .app {
    height: 100vh;
    overflow: hidden;
    font-family: Roboto, 'Noto Sans', sans-serif;
    color: #09090b;
  }
  button {
    padding: 0;
    border: 0;
    background: none;
    font: inherit;
    color: inherit;
    cursor: pointer;
  }
  svg {
    display: block;
  }
  h1, h2, hr {
    margin: 0;
  }
  .icon {
    width: 72px;
    height: 72px;
    fill: none;
    stroke: #a1a1aa;
    stroke-width: 1.5;
    stroke-linecap: round;
    stroke-linejoin: round;
  }
  .topbar {
    display: flex;
    align-items: center;
    justify-content: space-between;
    height: 192px;
    padding: 0 48px;
    background: #fff;
    box-shadow: 0 0 0 3px rgba(9, 9, 11, 0.07), 0 3px 9px rgba(0, 0, 0, 0.06);
  }
  .tools {
    display: flex;
    align-items: center;
    gap: 48px;
  }
  .plain {
    position: relative;
  }
  .lang {
    width: 108px;
    height: 108px;
    border-radius: 24px;
    background: #e8f6fa;
    color: #0891b2;
    font-size: 48px;
    font-weight: 700;
  }
  .badge {
    position: absolute;
    top: -18px;
    right: -30px;
    box-sizing: border-box;
    min-width: 48px;
    height: 48px;
    border: 3px solid #d8f3f9;
    border-radius: 18px;
    background: #ecfeff;
    color: #0891b2;
    font-size: 36px;
    font-weight: 500;
    line-height: 42px;
    text-align: center;
  }
  .avatar {
    width: 96px;
    height: 96px;
    border-radius: 50%;
    background: #09090b;
    color: #fff;
    font-size: 42px;
  }
  main {
    display: flex;
    flex-direction: column;
    gap: 96px;
    padding: 96px 48px;
  }
  .heading {
    display: flex;
    flex-direction: column;
    align-items: flex-start;
    gap: 48px;
  }
  h1 {
    font-size: 72px;
    line-height: 96px;
    font-weight: 700;
    letter-spacing: -0.025em;
  }
  .primary {
    height: 108px;
    padding: 0 36px;
    border-radius: 24px;
    background: #0891b2;
    color: #fff;
    font-size: 42px;
    font-weight: 700;
    box-shadow: 0 3px 6px rgba(0, 0, 0, 0.05);
  }
  .cards {
    display: flex;
    flex-direction: column;
    gap: 24px;
  }
  .card {
    border-radius: 36px;
    background: #fff;
    box-shadow: 0 0 0 3px rgba(9, 9, 11, 0.06), 0 3px 6px rgba(0, 0, 0, 0.06);
  }
  .card-head {
    display: flex;
    align-items: center;
    gap: 36px;
    padding: 48px 72px;
    border-bottom: 3px solid #e4e4e7;
  }
  h2 {
    font-size: 48px;
    line-height: 72px;
    font-weight: 700;
  }
  .card-body, .list {
    padding: 72px;
  }
  .map {
    position: relative;
    overflow: hidden;
    aspect-ratio: 1050 / 1398;
    background: #bbe2c6;
  }
  .terrain {
    width: 100%;
    height: 100%;
  }
  .g1 { fill: #bbe2c6; }
  .g2 { fill: #a8dab5; }
  .g3 { fill: #94d2a5; }
  .t { fill: #aecbb8; }
  .t2 { fill: #f0eee6; }
  .b { fill: #f4efe3; }
  .l { fill: #fbf8f3; }
  .w { fill: #8ab4f8; }
  .border {
    fill: none;
    stroke: #6b7175;
    stroke-width: 2px;
    stroke-linejoin: round;
    vector-effect: non-scaling-stroke;
  }
  .dashed {
    stroke-dasharray: 8 7;
  }
  .ring, .town {
    fill: #fff;
    stroke: #000;
    stroke-width: 3px;
  }
  .town {
    fill: #f1f1f1;
    stroke: #3c4043;
    stroke-width: 2px;
  }
  .country, .city {
    fill: #1b1c1e;
    stroke: rgba(255, 255, 255, 0.75);
    stroke-width: 8px;
    stroke-linejoin: round;
    paint-order: stroke;
    font-size: 42px;
    font-weight: 700;
  }
  .city {
    fill: #202124;
    font-size: 36px;
    font-weight: 500;
  }
  .sea {
    fill: #1a66c8;
    font-size: 33px;
  }
  .pin, .cluster {
    position: absolute;
    width: 78px;
    height: 111px;
    transform: translate(-50%, -100%);
  }
  .cluster {
    display: grid;
    place-items: center;
    width: 124px;
    height: 124px;
    transform: translate(-50%, -50%);
    color: rgba(255, 255, 255, 0.9);
    font-size: 36px;
  }
  .cluster svg, .cluster span {
    grid-area: 1 / 1;
  }
  .controls {
    position: absolute;
    inset: 30px 30px 72px;
    display: flex;
    flex-direction: column;
    justify-content: space-between;
    align-items: flex-end;
    pointer-events: none;
  }
  .controls button {
    pointer-events: auto;
  }
  .control-row {
    display: flex;
    align-self: stretch;
    justify-content: space-between;
  }
  .types {
    display: flex;
    font-size: 54px;
    color: #565656;
  }
  .types button {
    height: 120px;
    padding: 0 69px;
    border-radius: 0 6px 6px 0;
    background: #fff;
    box-shadow: 0 3px 12px rgba(0, 0, 0, 0.2);
  }
  .types .active {
    border-radius: 6px 0 0 6px;
    color: #000;
    font-weight: 500;
  }
  .square, .zoom {
    display: grid;
    place-items: center;
    width: 120px;
    height: 120px;
    border-radius: 6px;
    background: #fff;
    box-shadow: 0 3px 12px rgba(0, 0, 0, 0.2);
  }
  .control-stack {
    display: flex;
    flex-direction: column;
    gap: 96px;
  }
  .zoom {
    height: 243px;
  }
  .zoom button {
    display: grid;
    place-items: center;
    width: 120px;
    height: 120px;
  }
  .zoom hr {
    width: 90px;
    height: 3px;
    border: 0;
    background: #e6e6e6;
  }
  .footer {
    position: absolute;
    inset: auto 0 0;
    display: flex;
    align-items: flex-end;
    justify-content: space-between;
  }
  .google {
    padding-left: 30px;
  }
  .halo path, .halo circle {
    stroke: rgba(255, 255, 255, 0.8);
    stroke-width: 10;
  }
  .legal {
    display: flex;
    color: #000;
    font-size: 30px;
    line-height: 42px;
  }
  .legal > * {
    display: flex;
    align-items: center;
    height: 42px;
    background: rgba(245, 245, 245, 0.7);
  }
  .keys {
    padding: 0 21px 0 15px;
  }
  .data {
    padding: 0 18px;
  }
  .scale {
    gap: 6px;
    padding: 0 18px 0 15px;
    margin-left: 3px;
  }
  .terms {
    padding: 0 18px;
    color: inherit;
    text-decoration: none;
  }
  .panel {
    min-height: 600px;
    overflow: hidden;
    border-radius: 36px;
    box-shadow: 0 0 0 3px rgba(9, 9, 11, 0.06);
  }
  .panel-bar {
    display: flex;
    align-items: center;
    justify-content: flex-end;
    height: 132px;
    padding: 0 48px;
  }
  .panel-bar .badge {
    top: -24px;
    right: -36px;
  }
  .scroller {
    overflow: hidden;
  }
  table {
    width: 1500px;
    border-collapse: collapse;
    table-layout: fixed;
  }
  th {
    height: 144px;
    padding: 0 36px;
    border-top: 3px solid #e4e4e4;
    border-bottom: 3px solid #e4e4e4;
    background: #fafafa;
    font-size: 42px;
    font-weight: 700;
    text-align: left;
  }
  td {
    height: 150px;
  }
  .id {
    width: 83px;
  }
  .name {
    width: 766px;
  }
</style>
